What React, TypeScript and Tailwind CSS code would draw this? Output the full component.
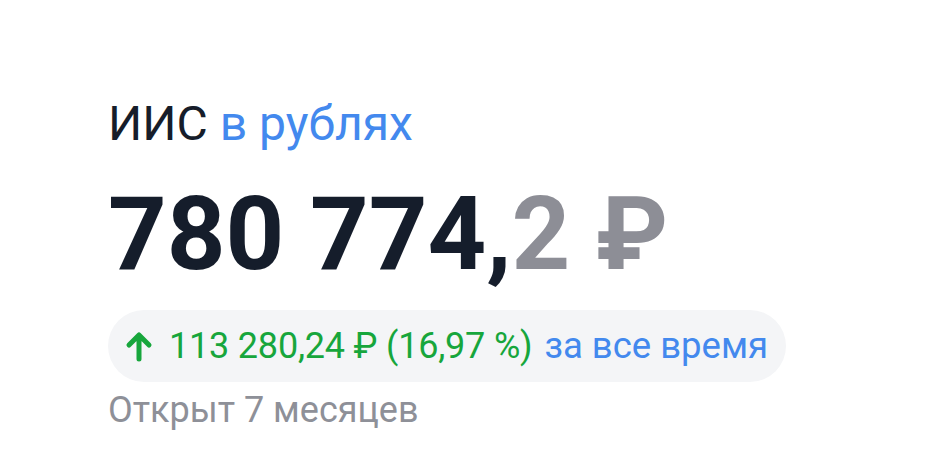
export default function App() {
  return (
    <div
      className="w-[926px] h-[468px] bg-white pl-[108px] pt-[95px]"
      style={{ fontFamily: "Roboto, 'Noto Sans', sans-serif" }}
    >
      <div className="text-[48px] leading-[58px]">
        <span className="text-[#161d2a]">ИИС </span>
        <span className="text-[#4389ee]">в рублях</span>
      </div>
      <div className="mt-[31px] text-[102.5px] leading-[100px] font-bold">
        <span className="text-[#151d2b]">780 774,</span>
        <span className="text-[#8d8e96]">2 ₽</span>
      </div>
      <div className="mt-[26px] inline-flex items-center h-[72px] rounded-full bg-[#f4f5f7] pl-[16px] pr-[18px]">
        <svg width="30" height="32" viewBox="0 0 30 32" className="text-[#17a63c]">
          <path
            d="M15 29V6M5 15L15 5L25 15"
            fill="none"
            stroke="currentColor"
            strokeWidth="5"
            strokeLinecap="round"
            strokeLinejoin="round"
          />
        </svg>
        <span className="ml-[15px] text-[36px] text-[#17a63c] tracking-[-0.2px]">113 280,24 ₽ (16,97 %)</span>
        <span className="ml-[12px] text-[36.5px] text-[#4389ee]">за все время</span>
      </div>
      <div className="mt-[6px] text-[36px] leading-[44px] text-[#8e9098]">Открыт 7 месяцев</div>
    </div>
  );
}
